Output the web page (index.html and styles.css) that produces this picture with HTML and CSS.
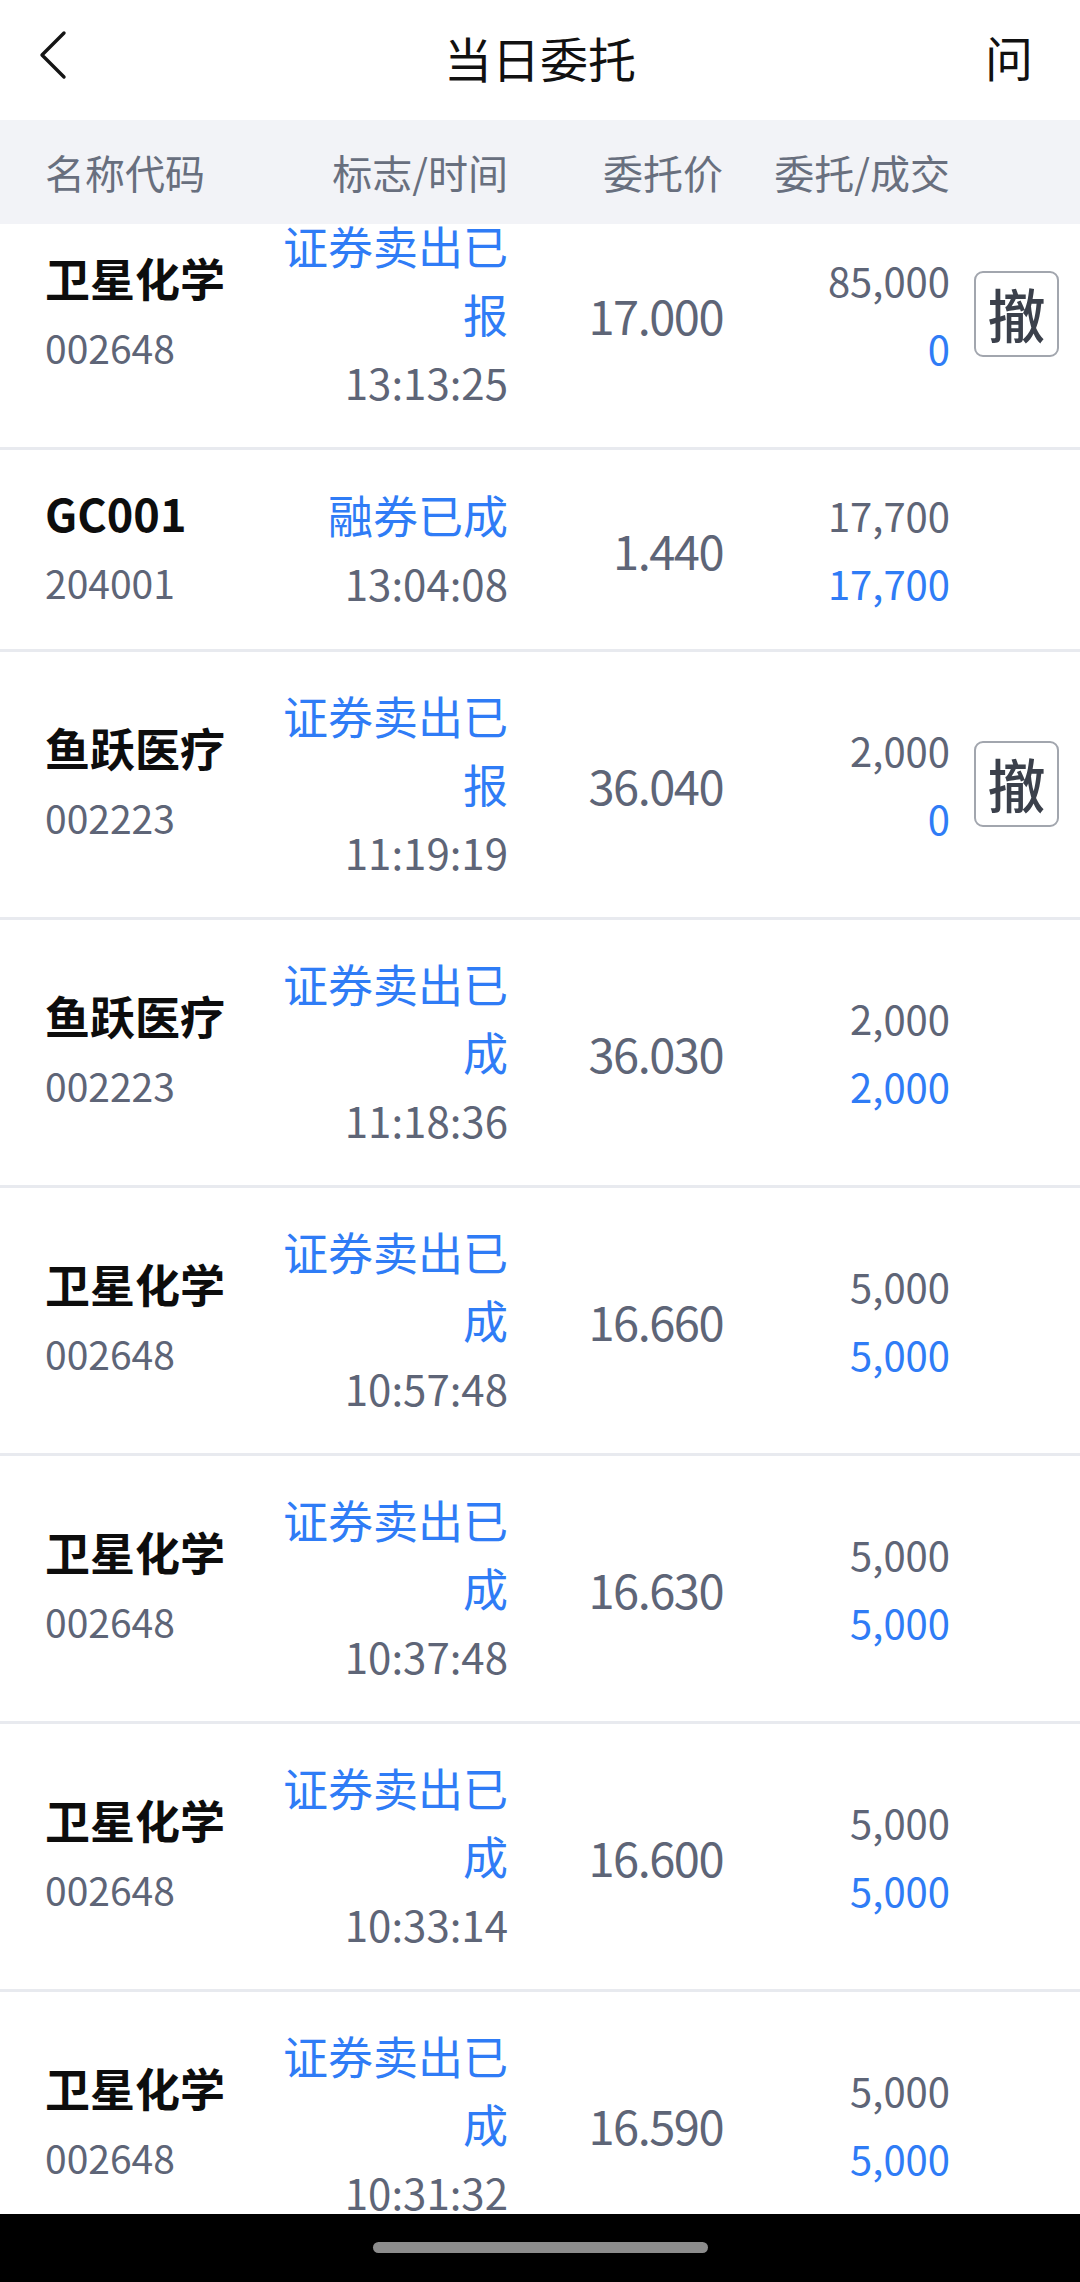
FILE: index.html
```html
<!DOCTYPE html>
<html lang="zh-CN">
<head>
<meta charset="utf-8">
<title>当日委托</title>
<link rel="stylesheet" href="styles.css">
</head>
<body>
<div class="screen">
  <header class="nav">
    <svg class="back" width="32" height="52" viewBox="0 0 32 52"><path d="M28 3 L6 25 L28 47" fill="none" stroke="#151515" stroke-width="3.4" stroke-linecap="round" stroke-linejoin="round"/></svg>
    <h1 class="title">当日委托</h1>
    <span class="help">问</span>
  </header>
  <div class="thead grid">
    <div class="h1">名称代码</div>
    <div class="h2">标志/时间</div>
    <div class="h3">委托价</div>
    <div class="h4">委托/成交</div>
    <div></div>
  </div>
  <div class="list">
    <div class="rows">
      <div class="row grid">
        <div class="c1"><div class="name">卫星化学</div><div class="code">002648</div></div>
        <div class="c2"><div class="status">证券卖出已报</div><div class="time">13:13:25</div></div>
        <div class="c3">17.000</div>
        <div class="c4"><div>85,000</div><div class="done">0</div></div>
        <div class="c5"><span class="cancel">撤</span></div>
      </div>
      <div class="row grid">
        <div class="c1"><div class="name">GC001</div><div class="code">204001</div></div>
        <div class="c2"><div class="status">融券已成</div><div class="time">13:04:08</div></div>
        <div class="c3">1.440</div>
        <div class="c4"><div>17,700</div><div class="done">17,700</div></div>
        <div class="c5"></div>
      </div>
      <div class="row grid">
        <div class="c1"><div class="name">鱼跃医疗</div><div class="code">002223</div></div>
        <div class="c2"><div class="status">证券卖出已报</div><div class="time">11:19:19</div></div>
        <div class="c3">36.040</div>
        <div class="c4"><div>2,000</div><div class="done">0</div></div>
        <div class="c5"><span class="cancel">撤</span></div>
      </div>
      <div class="row grid">
        <div class="c1"><div class="name">鱼跃医疗</div><div class="code">002223</div></div>
        <div class="c2"><div class="status">证券卖出已成</div><div class="time">11:18:36</div></div>
        <div class="c3">36.030</div>
        <div class="c4"><div>2,000</div><div class="done">2,000</div></div>
        <div class="c5"></div>
      </div>
      <div class="row grid">
        <div class="c1"><div class="name">卫星化学</div><div class="code">002648</div></div>
        <div class="c2"><div class="status">证券卖出已成</div><div class="time">10:57:48</div></div>
        <div class="c3">16.660</div>
        <div class="c4"><div>5,000</div><div class="done">5,000</div></div>
        <div class="c5"></div>
      </div>
      <div class="row grid">
        <div class="c1"><div class="name">卫星化学</div><div class="code">002648</div></div>
        <div class="c2"><div class="status">证券卖出已成</div><div class="time">10:37:48</div></div>
        <div class="c3">16.630</div>
        <div class="c4"><div>5,000</div><div class="done">5,000</div></div>
        <div class="c5"></div>
      </div>
      <div class="row grid">
        <div class="c1"><div class="name">卫星化学</div><div class="code">002648</div></div>
        <div class="c2"><div class="status">证券卖出已成</div><div class="time">10:33:14</div></div>
        <div class="c3">16.600</div>
        <div class="c4"><div>5,000</div><div class="done">5,000</div></div>
        <div class="c5"></div>
      </div>
      <div class="row grid">
        <div class="c1"><div class="name">卫星化学</div><div class="code">002648</div></div>
        <div class="c2"><div class="status">证券卖出已成</div><div class="time">10:31:32</div></div>
        <div class="c3">16.590</div>
        <div class="c4"><div>5,000</div><div class="done">5,000</div></div>
        <div class="c5"></div>
      </div>
    </div>
  </div>
  <div class="sysbar"><span class="pill"></span></div>
</div>
</body>
</html>
```

FILE: styles.css
```css
html, body {
  margin: 0;
  padding: 0;
  background: #fff;
}
body {
  font-family: "Noto Sans CJK SC", "Noto Sans", sans-serif;
}
.screen {
  width: 1080px;
  height: 2282px;
  display: flex;
  flex-direction: column;
  overflow: hidden;
}
.nav {
  height: 120px;
  flex: none;
  display: grid;
  grid-template-columns: 1fr auto 1fr;
  align-items: center;
  background: #fff;
}
.back {
  margin-left: 36px;
  margin-bottom: 8px;
  display: block;
}
.title {
  margin: 0 0 6px;
  font-size: 48px;
  font-weight: 400;
  color: #111;
  line-height: 1;
}
.help {
  justify-self: end;
  margin: 0 47px 8px 0;
  font-size: 48px;
  color: #111;
  line-height: 1;
}
.grid {
  display: grid;
  grid-template-columns: 213px 250px 215px 227px 1fr;
  padding-left: 45px;
}
.thead {
  height: 104px;
  flex: none;
  background: #f2f3f7;
  align-items: center;
  font-size: 40px;
  color: #686f7e;
}
.h2, .h3, .h4 {
  text-align: right;
}
.list {
  flex: 1;
  overflow: hidden;
}
.rows {
  margin-top: -42px;
}
.row {
  align-items: center;
  padding: 30px 0 31px 45px;
  border-bottom: 3px solid #e8eaef;
}
.name {
  font-size: 45px;
  font-weight: 700;
  color: #0d0d0d;
  line-height: 66px;
}
.code {
  font-size: 39px;
  color: #5e6577;
  line-height: 72px;
}
.c2 {
  text-align: right;
  line-height: 68px;
}
.status {
  font-size: 45px;
  color: #2f7cf6;
}
.time {
  font-size: 42px;
  color: #5e6577;
}
.c3 {
  text-align: right;
  font-size: 47px;
  color: #5e6577;
  letter-spacing: -1.5px;
}
.c4 {
  text-align: right;
  font-size: 40px;
  line-height: 68px;
  color: #5e6577;
}
.c4 .done {
  color: #2f7cf6;
}
.c5 {
  display: flex;
  align-items: center;
}
.cancel {
  margin-left: 24px;
  width: 85px;
  height: 86px;
  box-sizing: border-box;
  border: 2px solid #a2a6ae;
  border-radius: 9px;
  font-size: 58px;
  font-weight: 500;
  line-height: 80px;
  text-align: center;
  color: #3b404b;
  background: #fff;
}
.sysbar {
  height: 68px;
  flex: none;
  background: #000;
  display: flex;
  justify-content: center;
  align-items: flex-start;
}
.pill {
  margin-top: 28px;
  width: 335px;
  height: 11px;
  border-radius: 6px;
  background: #8c8c8c;
}
```
